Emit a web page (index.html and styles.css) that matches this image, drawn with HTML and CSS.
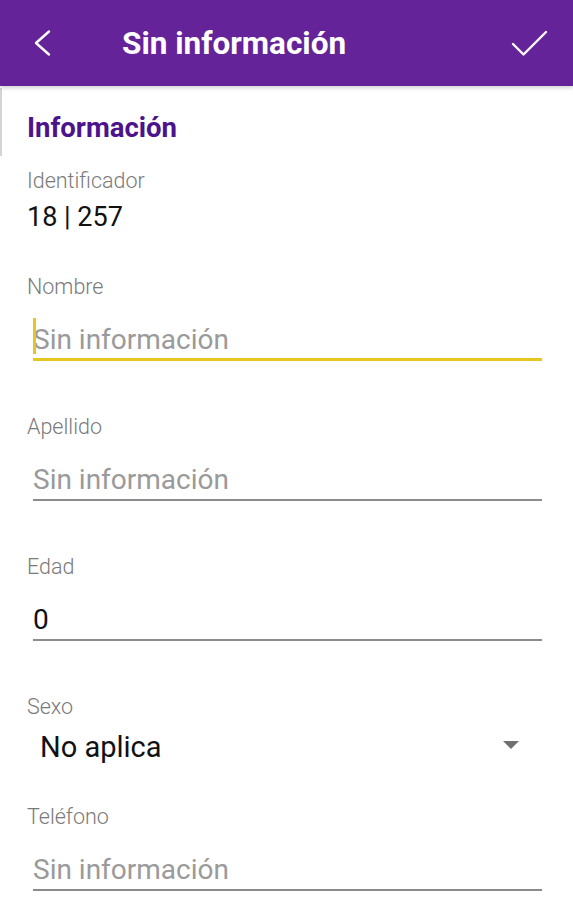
FILE: index.html
```html
<!DOCTYPE html>
<html lang="es">
<head>
    <meta charset="UTF-8">
    <title>Sin información</title>
    <link rel="stylesheet" href="styles.css">
</head>
<body>
    <header class="toolbar">
        <span class="toolbar-back">
            <svg width="24" height="28" viewBox="0 0 24 28"><path d="M20 2.5 L7 14 L20 25.5" fill="none" stroke="#fff" stroke-width="2.4" stroke-linecap="round" stroke-linejoin="round"/></svg>
        </span>
        <h1 class="toolbar-title">Sin información</h1>
        <span class="toolbar-ok">
            <svg width="38" height="30" viewBox="0 0 38 30"><path d="M2 15 L12.5 25.5 L35 3" fill="none" stroke="#fff" stroke-width="2.4" stroke-linecap="round" stroke-linejoin="round"/></svg>
        </span>
    </header>

    <div class="scroll-hint"></div>

    <main class="form">
        <h2 class="section-title">Información</h2>

        <div class="field field-static">
            <div class="label">Identificador</div>
            <div class="value">18 | 257</div>
        </div>

        <div class="field">
            <div class="label">Nombre</div>
            <div class="input input-focus"><span class="cursor"></span><span class="placeholder">Sin información</span></div>
        </div>

        <div class="field">
            <div class="label">Apellido</div>
            <div class="input"><span class="placeholder">Sin información</span></div>
        </div>

        <div class="field">
            <div class="label">Edad</div>
            <div class="input">0</div>
        </div>

        <div class="field field-select">
            <div class="label">Sexo</div>
            <div class="select">
                <span>No aplica</span>
                <span class="select-arrow"></span>
            </div>
        </div>

        <div class="field field-last">
            <div class="label">Teléfono</div>
            <div class="input"><span class="placeholder">Sin información</span></div>
        </div>
    </main>
</body>
</html>
```

FILE: styles.css
```css
body, html {
    margin: 0;
    padding: 0;
    font-family: Roboto, "Noto Sans", sans-serif;
    background: #ffffff;
    color: #1a1a1a;
}
.toolbar {
    height: 86px;
    background: #65239a;
    display: flex;
    align-items: center;
    box-shadow: 0 2px 4px rgba(0, 0, 0, 0.18);
    position: relative;
    z-index: 1;
}
.toolbar-back {
    display: flex;
    margin-left: 29px;
    margin-top: -1px;
}
.toolbar-title {
    margin: 0 0 0 69px;
    flex: 1;
    font-size: 31.5px;
    font-weight: 700;
    color: #ffffff;
}
.toolbar-ok {
    display: flex;
    margin-right: 24px;
    margin-top: 1px;
}
.scroll-hint {
    position: absolute;
    left: 0;
    top: 88px;
    width: 2px;
    height: 68px;
    background: #d4d4d4;
}
.form {
    padding: 26px 31px 0 27px;
}
.section-title {
    margin: 0;
    font-size: 27.5px;
    line-height: 32px;
    font-weight: 700;
    color: #4b138c;
}
.field {
    margin-bottom: 54px;
}
.field-static {
    margin-top: 25px;
    margin-bottom: 42px;
}
.field-last {
    margin-bottom: 0;
}
.label {
    font-size: 21.5px;
    line-height: 24px;
    font-weight: 300;
    color: #7a7a7a;
}
.value {
    margin-top: 8px;
    font-size: 27px;
    line-height: 32px;
    color: #111111;
}
.input {
    margin: 24px 0 0 6px;
    font-size: 28px;
    line-height: 34px;
    padding-bottom: 2px;
    border-bottom: 2px solid #8c8c8c;
    color: #111111;
    position: relative;
}
.input-focus {
    border-bottom: 3px solid #e8c620;
    padding-bottom: 1px;
}
.placeholder {
    color: #9a9a9a;
}
.cursor {
    position: absolute;
    left: 0;
    top: -5px;
    width: 3px;
    height: 36px;
    background: #e8c620;
}
.field-select {
    margin-bottom: 41px;
}
.select {
    margin: 11px 0 0 13px;
    display: flex;
    justify-content: space-between;
    align-items: center;
    font-size: 29px;
    line-height: 34px;
    color: #111111;
}
.select-arrow {
    width: 0;
    height: 0;
    border-left: 8px solid transparent;
    border-right: 8px solid transparent;
    border-top: 8px solid #707070;
    margin-right: 23px;
    margin-top: -4px;
}
```
